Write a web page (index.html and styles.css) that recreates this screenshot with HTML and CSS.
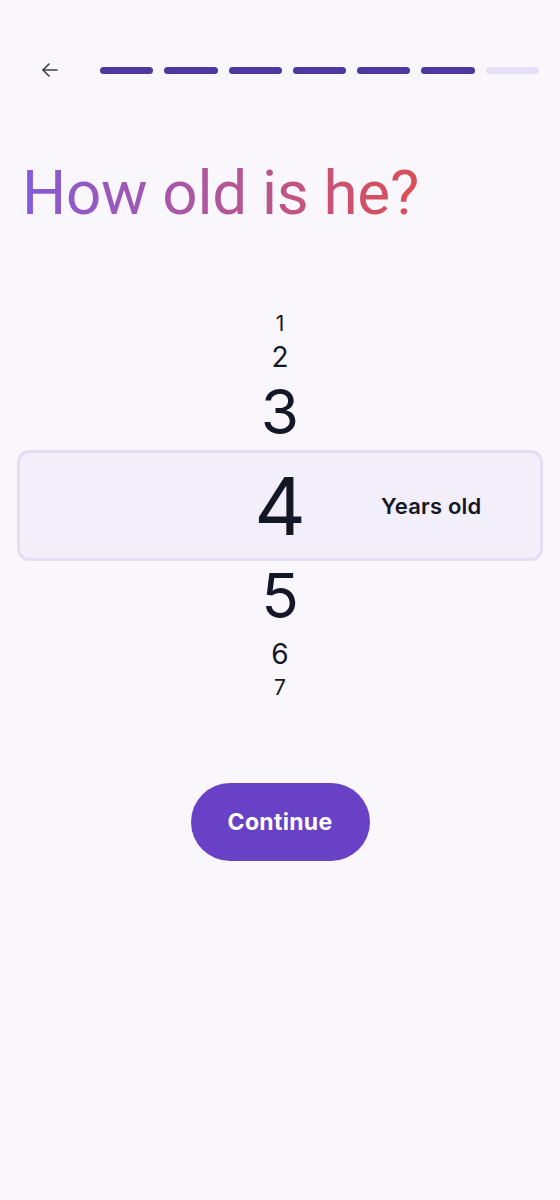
FILE: index.html
```html
<!DOCTYPE html>
<html lang="en">
<head>
    <meta charset="UTF-8">
    <meta name="viewport" content="width=device-width, initial-scale=1.0">
    <title>How old is he?</title>
    <link rel="stylesheet" href="styles.css">
</head>
<body>
    <div class="screen">
        <div class="topbar">
            <button class="back" aria-label="Back">
                <svg width="24" height="24" viewBox="0 0 24 24" fill="none" stroke="#3b3f4a" stroke-width="1.6" stroke-linecap="round" stroke-linejoin="round">
                    <path d="M19 12H5"/>
                    <path d="M11 6l-6 6 6 6"/>
                </svg>
            </button>
            <div class="progress">
                <span class="step done"></span>
                <span class="step done"></span>
                <span class="step done"></span>
                <span class="step done"></span>
                <span class="step done"></span>
                <span class="step done"></span>
                <span class="step"></span>
            </div>
        </div>

        <h1 class="title">How old is he?</h1>

        <div class="wheel">
            <div class="num far">1</div>
            <div class="num near">2</div>
            <div class="num big above">3</div>
            <div class="selected">
                <span class="num current">4</span>
                <span class="unit">Years old</span>
            </div>
            <div class="num big below">5</div>
            <div class="num near low">6</div>
            <div class="num far last">7</div>
        </div>

        <div class="actions">
            <button class="continue">Continue</button>
        </div>
    </div>
</body>
</html>
```

FILE: styles.css
```css
body {
    margin: 0;
    background-color: #f9f6fc;
    font-family: Inter, "Noto Sans", sans-serif;
    color: #141826;
}
.screen {
    padding-top: 58px;
}
.topbar {
    display: flex;
    align-items: center;
    padding: 0 21px 0 38px;
    gap: 38px;
}
.back {
    width: 24px;
    height: 24px;
    padding: 0;
    border: none;
    background: none;
    display: flex;
}
.progress {
    flex: 1;
    display: flex;
    gap: 11px;
}
.step {
    flex: 1;
    height: 7px;
    border-radius: 4px;
    background-color: #e6dff5;
}
.step.done {
    background-color: #4f37a0;
}
.title {
    margin: 72px 0 0 22px;
    font-family: Roboto, sans-serif;
    font-weight: 400;
    font-size: 62px;
    line-height: 77px;
    letter-spacing: -0.3px;
    background: linear-gradient(90deg, #845bd6 0%, #b3569a 50%, #db4e55 100%);
    -webkit-background-clip: text;
    background-clip: text;
    color: transparent;
    display: inline-block;
}
.wheel {
    margin-top: 77px;
    display: flex;
    flex-direction: column;
    align-items: center;
}
.num {
    text-align: center;
    font-weight: 400;
}
.far {
    font-size: 21px;
    height: 32px;
    line-height: 32px;
}
.far.last {
    height: 22px;
    line-height: 22px;
}
.near {
    font-size: 28px;
    height: 34px;
    line-height: 34px;
}
.near.low {
    height: 46px;
    line-height: 46px;
}
.big {
    font-size: 62px;
    line-height: 76px;
    height: 76px;
}
.big.below {
    height: 70px;
    line-height: 70px;
}
.selected {
    box-sizing: border-box;
    width: 526px;
    height: 111px;
    border: 3px solid #e4ddf4;
    border-radius: 12px;
    background-color: #f2eefa;
    position: relative;
    display: flex;
    align-items: center;
    justify-content: center;
}
.current {
    font-size: 80px;
    line-height: 1;
}
.unit {
    position: absolute;
    left: 361px;
    top: 50%;
    transform: translateY(-50%);
    font-size: 22px;
    font-weight: 600;
    letter-spacing: 0.2px;
}
.actions {
    margin-top: 84px;
    display: flex;
    justify-content: center;
}
.continue {
    width: 179px;
    height: 78px;
    border: none;
    border-radius: 39px;
    background-color: #6941c6;
    color: #fff;
    font-family: Inter, sans-serif;
    font-size: 23px;
    font-weight: 700;
    letter-spacing: 0.3px;
}
```
